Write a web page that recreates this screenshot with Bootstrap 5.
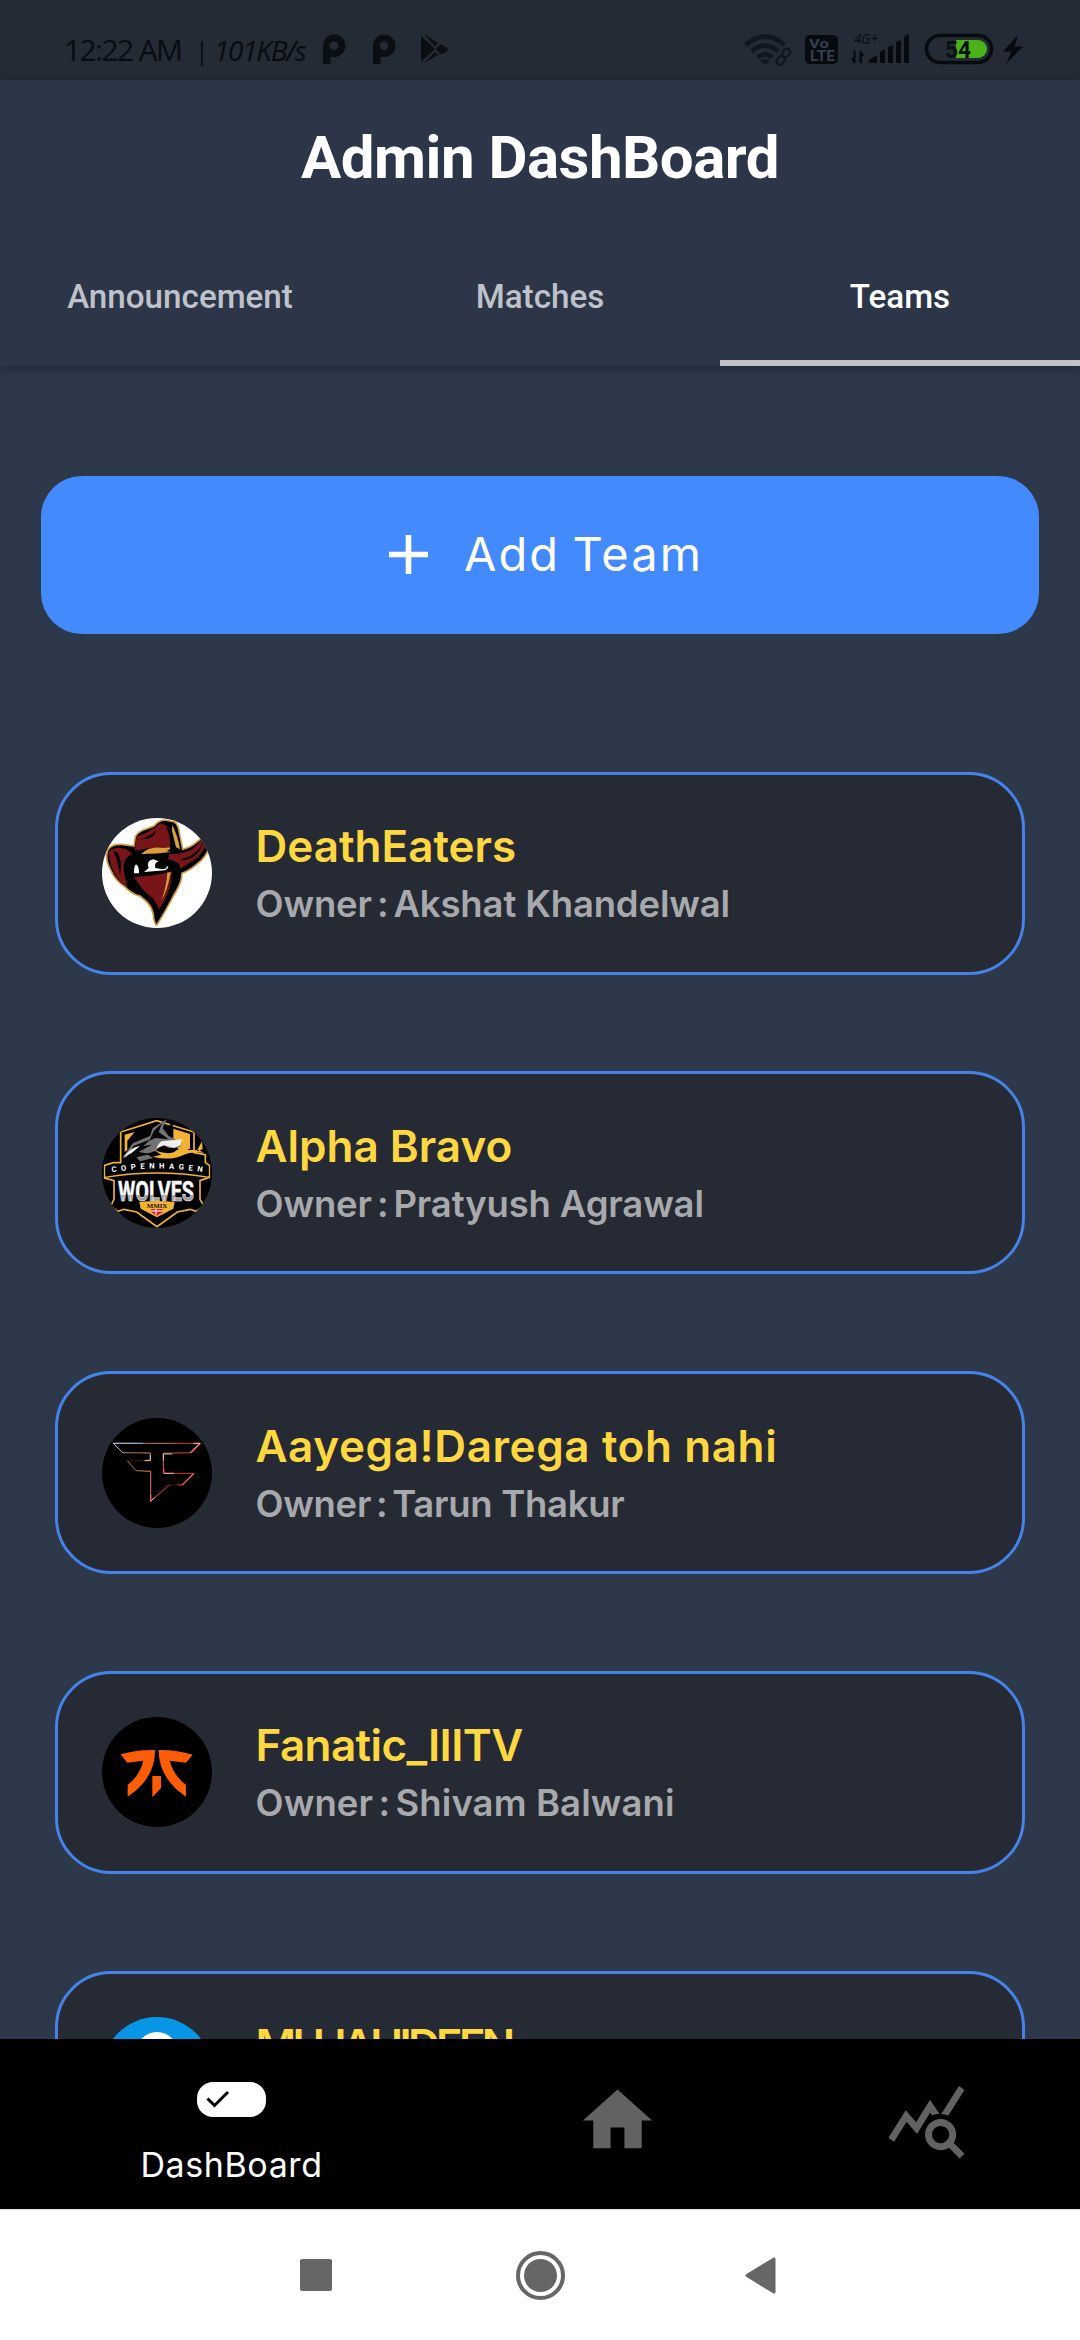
<!DOCTYPE html>
<html lang="en">
<head>
<meta charset="utf-8">
<meta name="viewport" content="width=device-width, initial-scale=1">
<title>Admin DashBoard</title>
<link rel="stylesheet" href="https://cdn.jsdelivr.net/npm/bootstrap@5.3.0/dist/css/bootstrap.min.css">
<style>
  body { background: #2d384a; font-family: Inter, "Open Sans", sans-serif; font-feature-settings: "calt" 0; }
  .screen { width: 1080px; height: 2340px; }
  .status { height: 80px; background: #222b36; color: #090c11; padding: 0 57px 0 64px; }
  .status-text { font: 400 30px/42px "Open Sans", sans-serif; padding-top: 29px; white-space: nowrap; }
  .status-text .clock { letter-spacing: -1.6px; width: 131px; }
  .status-text .rate { font-size: 28px; letter-spacing: -1.3px; font-style: italic; width: 109px; }
  .status-text .bar { font-size: 25px; width: 19px; }
  .app-head { height: 286px; background: #2c3648; font-family: Roboto, sans-serif; box-shadow: 0 3px 9px rgba(0,0,0,.28); z-index: 1; }
  .app-title { font-size: 60px; font-weight: 700; line-height: 70px; padding-top: 43px; letter-spacing: -.5px; }
  .tabs { height: 137px; }
  .tabs .nav-link { height: 137px; border-radius: 0; border-bottom: 6px solid transparent; color: #bfc2c8; font-size: 33.2px; font-weight: 500; line-height: 39px; padding: 48px 0 0; }
  .tabs .nav-link.active { color: #fff; background: none; border-color: #c0c3c9; }
  .feed { padding: 110px 41px 0; }
  .add-btn { height: 158px; border-radius: 41px; background: #448aff; font-size: 47px; padding: 0 0 2px 12px; border: 0; gap: 36px; }
  .add-btn:hover { background: #448aff; }
  .add-label { letter-spacing: 2.1px; word-spacing: -3px; }
  .team-list { padding: 137.5px 14px 0; gap: 96.8px; }
  .team { height: 203px; background: #262a34; border: 3px solid #4583ea; border-radius: 56px; padding: 0 0 0 44px; gap: 43.5px; }
  .avatar { width: 110px; height: 110px; }
  .team-text { min-height: 118px; white-space: nowrap; }
  .team-name { color: #ffd740; font-size: 44px; line-height: 56px; font-weight: 600; padding-top: 4px; }
  .team:nth-child(3) .team-name { letter-spacing: .6px; }
  .team:nth-child(4) .team-name { letter-spacing: -.6px; }
  .team:nth-child(5) .team-name { letter-spacing: -3.7px; }
  .owner { color: #a8a9ad; font-size: 36.5px; line-height: 54px; font-weight: 600; margin-top: 3px; letter-spacing: -.15px; }
  .owner .sep { word-spacing: -4px; }
  .team:nth-child(3) .owner { letter-spacing: -.3px; }
  .team:nth-child(4) .owner { letter-spacing: .1px; }
  .bottom { height: 170px; background: #000; z-index: 1; }
  .dash { width: 463px; color: #fff; padding-top: 29px; }
  .dash-label { font-size: 34px; line-height: 40px; margin-top: 15px; letter-spacing: .6px; }
  .nav-home { margin: 39.500px 0 0 113px; }
  .nav-stats { margin: 39.500px 0 0 225.500px; }
  .sysnav { height: 131px; background: #fff; border-top: 1px solid #dedede; padding-left: 300px; }
  .sys-home { margin-left: 184px; }
  .sys-back { margin-left: 180px; }
</style>
</head>
<body>
<div class="screen d-flex flex-column overflow-hidden position-relative">
  <div class="status d-flex justify-content-between flex-shrink-0">
    <div class="d-flex">
      <div class="status-text d-flex align-items-center align-self-start">
        <span class="clock">12:22 AM</span><span class="bar">|</span><span class="rate">101KB/s</span>
      </div>
      <svg width="126" height="80" viewBox="323 0 126 80" fill="#0b0e13">
        <path fill-rule="evenodd" d="M323 64V46a11.200 11.200 0 1 1 11.200 11H330.500V64zM334 41.500a4.300 4.300 0 1 0 .01 0z"/>
        <path fill-rule="evenodd" d="M373 64V46a11.200 11.200 0 1 1 11.200 11H380.500V64zM384 41.500a4.300 4.300 0 1 0 .01 0z"/>
        <path d="M421 36l14 13-14 13zM424 34l14 9-3 3.500zM440 44.500l5 2q6 3 0 6l-4 2-5-5zM424 63l11-11 3 3z"/>
      </svg>
    </div>
    <svg width="280" height="80" viewBox="743 0 280 80" fill="#070a0e">
      <g fill="none" stroke="#11161f" stroke-width="4.600"><path d="M745.500 45q19.500-17 39 0M751.500 51.500q13.500-12 27 0M758 57.500q7.500-6 14 0" /></g>
      <path fill="#11161f" d="M760 61q5-4 10 0l-5 4z"/>
      <g fill="none" stroke="#222b36" stroke-width="7"><path d="M779 61l9-10"/></g>
      <g fill="none" stroke="#11161f" stroke-width="2.400"><rect x="-6.500" y="-3.300" width="9" height="6.600" rx="3.300" transform="translate(782 59) rotate(-48)"/><rect x="-3" y="-3.300" width="9" height="6.600" rx="3.300" transform="translate(785 54) rotate(-48)"/></g>
      <rect x="805" y="35" width="33" height="29" rx="5"/>
      <g fill="#34404e" font-family="Roboto" font-weight="700"><text x="809" y="47.500" font-size="13" textLength="20" lengthAdjust="spacingAndGlyphs">Vo</text><text x="810" y="61" font-size="14" textLength="25" lengthAdjust="spacingAndGlyphs">LTE</text></g>
      <text x="854" y="44" font-family="Open Sans" font-style="italic" font-size="14" textLength="24" lengthAdjust="spacingAndGlyphs">4G+</text>
      <path d="M855.500 51v12h-2l-2.500-5h2.500V51zM859.500 63V51h2l3 5h-2.500v7zM869 63v-3l8-5v8zM880 63V51.500l5-2V63zM888 63V47l5-2v18zM896 63V42l5-2v23zM904 63V37.500q2-3 5-3.500v29z"/>
      <rect x="926.500" y="35.500" width="65" height="27" rx="13.500" fill="none" stroke="#070a0e" stroke-width="3.600"/>
      <path fill="#4cb21a" d="M956 40h22a9 9 0 0 1 0 18h-22z"/>
      <text x="945" y="57.500" font-family="Roboto" font-weight="700" font-size="24" fill="#0a1010" textLength="26" lengthAdjust="spacingAndGlyphs">54</text>
      <path d="M1018 35l-15 16.500h8.500L1006 64l17-17.500h-8.500z"/>
    </svg>
  </div>

  <header class="app-head flex-shrink-0 position-relative d-flex flex-column justify-content-between">
    <h1 class="app-title text-white text-center m-0">Admin DashBoard</h1>
    <nav class="tabs nav nav-justified">
      <a class="nav-link" href="#">Announcement</a>
      <a class="nav-link" href="#">Matches</a>
      <a class="nav-link active" href="#">Teams</a>
    </nav>
  </header>

  <main class="feed flex-grow-1 overflow-hidden">
    <button class="add-btn btn text-white w-100 d-flex align-items-center justify-content-center" type="button">
      <svg width="39" height="39" viewBox="0 0 39 39" stroke="#fff" stroke-width="5.600"><path d="M19.500 0v39M0 19.500h39"/></svg>
      <span class="add-label">Add Team</span>
    </button>

    <div class="team-list d-flex flex-column">
      <article class="team d-flex align-items-center flex-shrink-0">
        <svg class="avatar" viewBox="36 56 330 330">
          <defs><clipPath id="disc1"><circle cx="201" cy="221" r="165"/></clipPath></defs>
          <g clip-path="url(#disc1)">
            <rect x="36" y="56" width="330" height="330" fill="#fff"/>
            <path d="M132 140L136 112Q142 100 160 92L192 80Q207 62 225 62L254 68Q266 78 268 100L278 150Q304 143 318 130Q332 116 350 114L356 150Q344 176 326 190Q302 212 276 222L274 240Q268 262 250 290Q232 326 200 378Q191 370 190 345Q184 318 164 302L150 290Q126 285 104 262Q76 244 62 212Q44 180 53 152Q64 134 94 135Z" fill="#000" stroke="#d29a3b" stroke-width="5"/>
            <path d="M134 154L140 112Q166 104 198 84Q210 66 222 76Q236 78 240 96L248 150Q190 140 134 154z" fill="#781518"/>
            <path d="M56 158Q90 130 128 164Q96 174 102 220L112 262Q64 238 56 158zM238 164Q292 166 314 144Q332 120 352 116Q344 166 308 184L270 208Q274 188 234 180zM132 232Q190 232 246 216Q244 280 207 330L190 298Q156 274 132 232z" fill="#781518"/>
            <path d="M154 164Q178 140 218 146L248 144L230 156L244 158Q200 164 154 164zM246 76Q264 108 270 150L258 144L246 94zM232 220L242 218Q234 270 214 304Q230 260 232 220z" fill="#d8a03d"/>
            <path d="M232 82Q250 104 252 150L240 148Q242 108 228 82zM140 122Q170 118 198 94Q192 116 168 118zM70 154Q82 180 90 226Q98 190 84 162zM270 180Q318 172 340 128Q328 172 286 182z" fill="#000"/>
            <path d="M132 222Q132 194 140 196Q148 202 147 222zM162 218L176 206Q168 184 190 180L206 186Q192 190 196 206L218 210L236 205L226 213zM226 204l9-4-2 6z" fill="#fff"/>
          </g>
        </svg>
        <div class="team-text"><div class="team-name">DeathEaters</div><div class="owner"><span class="sep">Owner : </span>Akshat Khandelwal</div></div>
      </article>

      <article class="team d-flex align-items-center flex-shrink-0">
        <svg class="avatar" viewBox="36 54 330 330">
          <defs>
            <clipPath id="disc2"><circle cx="201" cy="219" r="165"/></clipPath>
            <linearGradient id="steel" x1="0" y1="0" x2="0" y2="1"><stop offset=".6" stop-color="#fff"/><stop offset=".63" stop-color="#9b9ba0"/></linearGradient>
          </defs>
          <g clip-path="url(#disc2)">
            <rect x="36" y="54" width="330" height="330" fill="#000"/>
            <path d="M92 160V96L200 62L312 96V160" fill="none" stroke="#f2b233" stroke-width="5"/>
            <path d="M104 104L134 96L112 122V150L104 156zM250 86L300 102V146L270 158L250 120z" fill="#f2b233"/>
            <path d="M70 188H92V158M312 158L346 164V188L358 196V232L330 242V298L342 318L318 334L300 328L262 336L201 380L140 336L102 328L84 334L62 318L72 298V242L44 234V196L70 188" fill="none" stroke="#f2b233" stroke-width="5"/>
            <path d="M98 174L128 130L180 108L188 84L230 58L218 84L236 108L276 128L270 142L236 144L214 132L198 152L170 162L190 174L150 184L134 166z" fill="#727276"/>
            <path d="M130 138L182 118L160 138L186 134L146 156L182 162L140 172L110 170zM192 92L216 70L206 96L236 118L196 114L178 122zM238 76L252 66L244 90z" fill="#08080a"/>
            <path d="M214 124L276 118L272 136L252 144L222 136L198 146L206 132zM100 172Q124 140 150 138L124 160z" fill="#eee"/>
            <path d="M188 148Q240 170 260 150H326L342 158Q298 156 282 164Q240 184 188 170L214 164zM336 124l-16 30 18-6z" fill="#f2b233"/>
            <path d="M46 198Q201 174 356 198V228Q201 204 46 230z" fill="#000"/>
            <path d="M44 232Q201 206 358 232" fill="none" stroke="#f2b233" stroke-width="4"/>
            <path id="arcText" d="M66 217Q201 194 342 217" fill="none"/>
            <text font-family="Roboto" font-size="23" font-weight="700" fill="#fff" textLength="272"><textPath href="#arcText" textLength="272">COPENHAGEN</textPath></text>
            <text x="84" y="302" font-family="Roboto" font-size="84" font-weight="700" fill="url(#steel)" stroke="#e4e4e6" stroke-width="2" textLength="228" lengthAdjust="spacingAndGlyphs">WOLVES</text>
            <path d="M148 306Q200 300 254 306L250 326L201 352L152 326z" fill="#f2b233"/>
            <text x="170" y="323" font-family="Liberation Serif" font-size="18" font-weight="700" fill="#17120a" textLength="62" lengthAdjust="spacingAndGlyphs">MMIX</text>
            <path d="M184 327h34v10l-17 10-17-10z" fill="#d22630"/><path d="M184 333h34M198 327v17" stroke="#fff" stroke-width="3"/>
          </g>
        </svg>
        <div class="team-text"><div class="team-name">Alpha Bravo</div><div class="owner"><span class="sep">Owner : </span>Pratyush Agrawal</div></div>
      </article>

      <article class="team d-flex align-items-center flex-shrink-0">
        <svg class="avatar" viewBox="36 54 330 330">
          <defs><linearGradient id="glow" gradientUnits="userSpaceOnUse" x1="70" y1="130" x2="300" y2="220"><stop stop-color="#b8c9ee"/><stop offset=".3" stop-color="#a5774e"/><stop offset=".55" stop-color="#e29a80"/><stop offset=".8" stop-color="#d8452c"/><stop offset="1" stop-color="#e83a26"/></linearGradient></defs>
          <circle cx="201" cy="219" r="165" fill="#000"/>
          <path d="M182 302V214L138 212L112 182H181V159L98 158L70 130H332L305 158L220 160V220H311L276 255H237L182 304" fill="none" stroke="#571b12" stroke-width="4" opacity=".55"/>
          <path d="M182 302V214L138 212L112 182M162 182H181V159L98 158L70 130H332L305 158L220 160V220H311L276 255H262M237 255L182 304" fill="none" stroke="url(#glow)" stroke-width="2.500"/>
          <path d="M70 130H160M70 130l28 28" stroke="#9fb4dd" stroke-width="3" fill="none"/>
          <path d="M166 181h15v-16M220 182v-20h26M300 158l30-28H310M222 220h30M311 220l-34 35M182 284v20l12-12" fill="none" stroke="#f6d5c6" stroke-width="2.500"/>
          <path d="M332 130l-27 28M311 222l-34 33M182 286v18M222 206v14" stroke="#ff4637" stroke-width="3" fill="none"/>
        </svg>
        <div class="team-text"><div class="team-name">Aayega!Darega toh nahi</div><div class="owner"><span class="sep">Owner : </span>Tarun Thakur</div></div>
      </article>

      <article class="team d-flex align-items-center flex-shrink-0">
        <svg class="avatar" viewBox="36 54 330 330">
          <circle cx="201" cy="219" r="165" fill="#000"/>
          <path fill="#ff5c08" d="M92 166Q140 152 195 153Q196 238 113 293V258Q150 228 160 185L112 191zM206 153Q260 152 308 167L288 191L239 185Q250 228 288 258V293Q206 238 206 153zM187 231H213V267L187 295z"/>
        </svg>
        <div class="team-text"><div class="team-name">Fanatic_IIITV</div><div class="owner"><span class="sep">Owner : </span>Shivam Balwani</div></div>
      </article>

      <article class="team d-flex align-items-center flex-shrink-0">
        <svg class="avatar" viewBox="0 0 110 110">
          <circle cx="55" cy="55" r="55" fill="#0796e5"/><circle cx="55" cy="36" r="21" fill="#fff"/>
        </svg>
        <div class="team-text"><div class="team-name">MUJAHIDEEN</div></div>
      </article>
    </div>
  </main>

  <nav class="bottom d-flex align-items-start flex-shrink-0 position-relative">
    <div class="dash d-flex flex-column align-items-center">
      <svg width="69" height="62" viewBox="0 0 69 62"><rect y="14" width="69" height="35" rx="16" fill="#fff"/><path d="M10.500 30.500l7 7L31 24" fill="none" stroke="#000" stroke-width="3"/></svg>
      <span class="dash-label">DashBoard</span>
    </div>
    <svg class="nav-home" width="83" height="83" viewBox="0 0 24 24" fill="#626262"><path d="M10 20v-6h4v6h5v-8h3L12 3 2 12h3v8z"/></svg>
    <svg class="nav-stats" width="83" height="83" viewBox="0 0 24 24" fill="#626262"><path d="M19.880 18.470c.44-.7.7-1.510.7-2.390 0-2.490-2.010-4.500-4.500-4.500s-4.500 2.010-4.500 4.500 2.010 4.500 4.490 4.500c.88 0 1.700-.26 2.390-.7L21.580 23 23 21.580zM16.080 18.580c-1.380 0-2.500-1.120-2.500-2.500s1.120-2.500 2.500-2.500 2.500 1.120 2.500 2.500-1.120 2.500-2.500 2.500zM15.720 10.080c-.74.02-1.450.18-2.100.45l-.55-.83-3.800 6.180-3.010-3.520-3.630 5.810L1 17l5-8 3 3.500L13 6zM18.310 10.580c-.64-.28-1.330-.45-2.050-.49L21.380 2 23 3.180z"/></svg>
  </nav>

  <div class="sysnav d-flex align-items-center flex-shrink-0">
    <svg width="32" height="32" viewBox="0 0 32 32"><rect width="32" height="32" rx="2" fill="#666"/></svg>
    <svg class="sys-home" width="49" height="49" viewBox="0 0 49 49"><circle cx="24.500" cy="24.500" r="22.500" fill="none" stroke="#666" stroke-width="4"/><circle cx="24.500" cy="24.500" r="16.500" fill="#666"/></svg>
    <svg class="sys-back" width="31" height="37" viewBox="0 0 31 37"><path d="M2 18.500L29 2v33z" fill="#666" stroke="#666" stroke-width="3" stroke-linejoin="round"/></svg>
  </div>
</div>
<script src="https://cdn.jsdelivr.net/npm/bootstrap@5.3.0/dist/js/bootstrap.bundle.min.js"></script>
</body>
</html>
